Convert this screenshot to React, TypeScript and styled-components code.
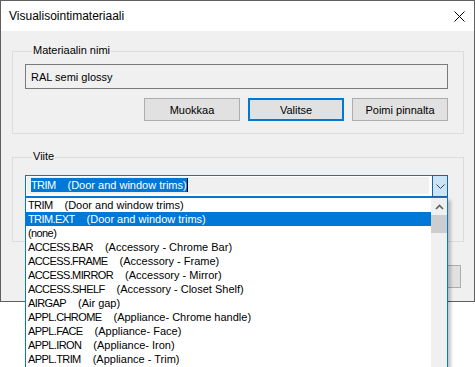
import React from 'react';
import styled, { createGlobalStyle } from 'styled-components';

const GlobalStyle = createGlobalStyle`
  html {
    overflow: hidden;
  }
  html, body {
    margin: 0;
    padding: 0;
    background: #fff;
  }
  body {
    min-height: 367px;
    font-family: 'Liberation Sans', Arial, sans-serif;
    font-size: 11px;
    color: #000;
  }
`;

const Dialog = styled.div`
  width: 475px;
  height: 302px;
  box-sizing: border-box;
  border: 1px solid #5f5f5f;
  background: #f0f0f0;
  display: flex;
  flex-direction: column;
`;

const TitleBar = styled.div`
  height: 30px;
  flex: none;
  background: #fff;
  display: flex;
  align-items: center;
  justify-content: space-between;
  padding: 0 9px 0 8px;
  font-size: 12px;
`;

const Body = styled.div`
  padding: 0 10px 0 11px;
  display: flex;
  flex-direction: column;
`;

const GroupBox = styled.div<{ $top: number; $bottom: number }>`
  margin-top: ${(p) => p.$top}px;
  border: 1px solid #dcdcdc;
  padding: 0 15px ${(p) => p.$bottom}px 12px;
  display: flex;
  flex-direction: column;
`;

const Legend = styled.div`
  align-self: flex-start;
  margin: -8px 0 0 7px;
  padding: 0 1px;
  line-height: 13px;
  background: #f0f0f0;
`;

const ReadOnlyField = styled.div`
  margin-top: 7px;
  height: 25px;
  box-sizing: border-box;
  border: 1px solid #7a7a7a;
  background: #f0f0f0;
  padding-left: 5px;
  display: flex;
  align-items: center;
`;

const ButtonRow = styled.div<{ $top: number }>`
  margin-top: ${(p) => p.$top}px;
  display: flex;
  justify-content: flex-end;
  gap: 8px;
`;

const Button = styled.button<{ $default?: boolean; $width?: number }>`
  width: ${(p) => p.$width ?? 96}px;
  height: 23px;
  box-sizing: border-box;
  background: #e1e1e1;
  border: 1px solid ${(p) => (p.$default ? '#0078d7' : '#adadad')};
  box-shadow: ${(p) => (p.$default ? 'inset 0 0 0 1px #0078d7' : 'none')};
  font-family: inherit;
  font-size: 11px;
  color: #000;
  padding: 0;
  margin: 0;
`;

const Footer = styled.div`
  margin: 23px 3px 0 0;
  display: flex;
  justify-content: flex-end;
  gap: 6px;
`;

const ComboWrap = styled.div`
  position: relative;
  margin-top: 12px;
`;

const Combo = styled.div`
  height: 22px;
  box-sizing: border-box;
  border: 1px solid #0078d7;
  background: #fff;
  display: flex;
  padding: 1px 0 1px 1px;
`;

const ComboField = styled.div`
  flex: 1;
  height: 17px;
  margin-right: 3px;
  background: #f0f0f0;
  padding: 1px 0 0 4px;
  box-sizing: border-box;
  display: flex;
  align-items: flex-start;
`;

const Selection = styled.span`
  background: #0078d7;
  color: #fff;
  line-height: 14px;
  white-space: nowrap;
`;

const Caret = styled.span`
  width: 1px;
  height: 14px;
  background: #000;
`;

const DropButton = styled.div`
  width: 16px;
  margin: -2px -1px -2px 0;
  box-sizing: border-box;
  border: 1px solid #1464ac;
  background: #cce4f7;
  display: flex;
  align-items: center;
  justify-content: center;
`;

const Popup = styled.div`
  position: absolute;
  top: 100%;
  left: 0;
  right: 0;
  height: 171px;
  box-sizing: border-box;
  border: 1px solid #0078d7;
  border-bottom: none;
  background: #fff;
  display: flex;
  box-shadow: 3px 3px 3px rgba(0, 0, 0, 0.22);
  z-index: 10;
`;

const Items = styled.div`
  flex: 1;
  overflow: hidden;
`;

const Item = styled.div<{ $selected?: boolean }>`
  height: 14px;
  line-height: 14px;
  padding-left: 2px;
  white-space: nowrap;
  background: ${(p) => (p.$selected ? '#0078d7' : 'transparent')};
  color: ${(p) => (p.$selected ? '#fff' : '#000')};
`;

const Code = styled.span`
  letter-spacing: -0.6px;
`;

const Desc = styled.span`
  margin-left: 12px;
`;

const ScrollBar = styled.div`
  width: 16px;
  background: #f0f0f0;
  display: flex;
  flex-direction: column;
`;

const ScrollArrow = styled.div`
  height: 17px;
  display: flex;
  align-items: center;
  justify-content: center;
`;

const Thumb = styled.div`
  height: 18px;
  background: #cdcdcd;
`;

const entries: [string, string][] = [
  ['TRIM', '(Door and window trims)'],
  ['TRIM.EXT', '(Door and window trims)'],
  ['(none)', ''],
  ['ACCESS.BAR', '(Accessory - Chrome Bar)'],
  ['ACCESS.FRAME', '(Accessory - Frame)'],
  ['ACCESS.MIRROR', '(Accessory - Mirror)'],
  ['ACCESS.SHELF', '(Accessory - Closet Shelf)'],
  ['AIRGAP', '(Air gap)'],
  ['APPL.CHROME', '(Appliance- Chrome handle)'],
  ['APPL.FACE', '(Appliance- Face)'],
  ['APPL.IRON', '(Appliance- Iron)'],
  ['APPL.TRIM', '(Appliance - Trim)'],
];

export default function App() {
  return (
    <>
      <GlobalStyle />
      <Dialog>
        <TitleBar>
          <span>Visualisointimateriaali</span>
          <svg width="11" height="11" viewBox="0 0 11 11">
            <path d="M0.5 0.5 L10.5 10.5 M10.5 0.5 L0.5 10.5" stroke="#000" strokeWidth="1" />
          </svg>
        </TitleBar>
        <Body>
          <GroupBox $top={20} $bottom={12}>
            <Legend>Materiaalin nimi</Legend>
            <ReadOnlyField>RAL semi glossy</ReadOnlyField>
            <ButtonRow $top={9}>
              <Button>Muokkaa</Button>
              <Button $default>Valitse</Button>
              <Button>Poimi pinnalta</Button>
            </ButtonRow>
          </GroupBox>
          <GroupBox $top={23} $bottom={44}>
            <Legend>Viite</Legend>
            <ComboWrap>
              <Combo>
                <ComboField>
                  <Selection>
                    <Code>TRIM</Code>
                    <Desc>(Door and window trims)</Desc>
                  </Selection>
                  <Caret />
                </ComboField>
                <DropButton>
                  <svg width="9" height="5" viewBox="0 0 9 5">
                    <polyline points="0.5,0.5 4.5,4.5 8.5,0.5" fill="none" stroke="#444" strokeWidth="1" />
                  </svg>
                </DropButton>
              </Combo>
              <Popup>
                <Items>
                  {entries.map(([code, desc], i) => (
                    <Item key={code} $selected={i === 1}>
                      <Code>{code}</Code>
                      {desc && <Desc>{desc}</Desc>}
                    </Item>
                  ))}
                </Items>
                <ScrollBar>
                  <ScrollArrow>
                    <svg width="9" height="6" viewBox="0 0 9 6">
                      <polyline points="1,5 4.5,1.5 8,5" fill="none" stroke="#606060" strokeWidth="1.6" />
                    </svg>
                  </ScrollArrow>
                  <Thumb />
                </ScrollBar>
              </Popup>
            </ComboWrap>
          </GroupBox>
          <Footer>
            <Button $width={75}>OK</Button>
            <Button $width={75}>Peruuta</Button>
          </Footer>
        </Body>
      </Dialog>
    </>
  );
}
